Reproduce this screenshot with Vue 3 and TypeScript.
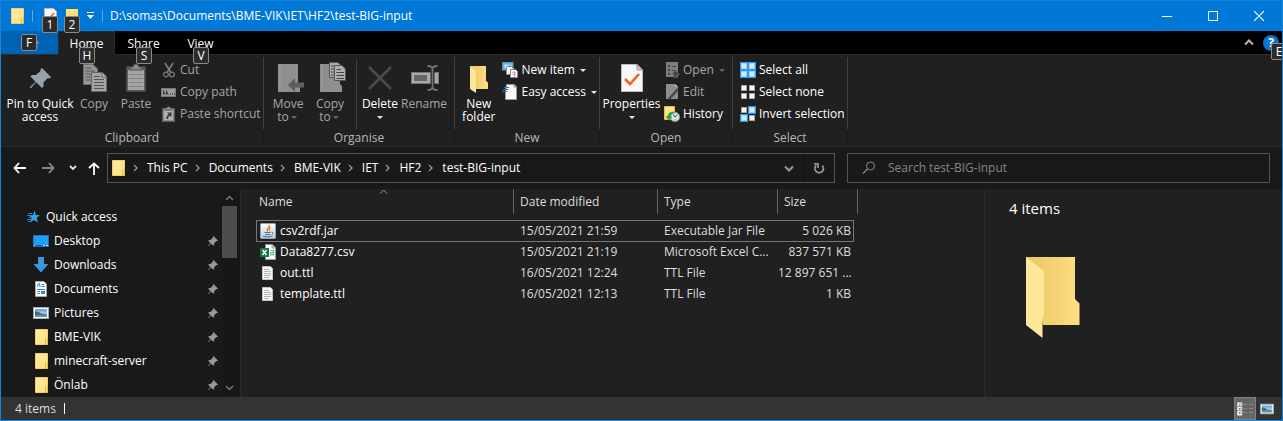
<script setup lang="ts">
import { ref } from 'vue'

interface SmallCommand {
  label: string
  icon: string
  disabled?: boolean
  menu?: boolean
}
interface LargeCommand {
  lines: string[]
  icon: string
  size: string
  disabled?: boolean
  menu?: 'inline' | 'below'
  divider?: boolean
}
interface RibbonGroup {
  name: string
  key: string
  large: LargeCommand[]
  small: SmallCommand[]
}
interface FileRow {
  name: string
  icon: string
  modified: string
  type: string
  size: string
}

const path = 'D:\\somas\\Documents\\BME-VIK\\IET\\HF2\\test-BIG-input'

const tabs = [
  { label: 'Home', tip: 'H' },
  { label: 'Share', tip: 'S' },
  { label: 'View', tip: 'V' },
]
const activeTab = ref('Home')

const groups: RibbonGroup[] = [
  {
    name: 'Clipboard',
    key: 'clipboard',
    large: [
      { lines: ['Pin to Quick', 'access'], icon: 'pin-large', size: 'wide' },
      { lines: ['Copy'], icon: 'copy', size: 'normal', disabled: true },
      { lines: ['Paste'], icon: 'paste', size: 'normal', disabled: true },
    ],
    small: [
      { label: 'Cut', icon: 'cut', disabled: true },
      { label: 'Copy path', icon: 'copy-path', disabled: true },
      { label: 'Paste shortcut', icon: 'paste-shortcut', disabled: true },
    ],
  },
  {
    name: 'Organise',
    key: 'organise',
    large: [
      { lines: ['Move', 'to'], icon: 'move-to', size: 'normal', disabled: true, menu: 'inline' },
      { lines: ['Copy', 'to'], icon: 'copy-to', size: 'normal', disabled: true, menu: 'inline' },
      { lines: ['Delete'], icon: 'delete', size: 'normal', menu: 'below', divider: true },
      { lines: ['Rename'], icon: 'rename', size: 'medium', disabled: true },
    ],
    small: [],
  },
  {
    name: 'New',
    key: 'new',
    large: [{ lines: ['New', 'folder'], icon: 'new-folder', size: 'normal' }],
    small: [
      { label: 'New item', icon: 'new-item', menu: true },
      { label: 'Easy access', icon: 'easy-access', menu: true },
    ],
  },
  {
    name: 'Open',
    key: 'open',
    large: [{ lines: ['Properties'], icon: 'properties', size: 'property', menu: 'below' }],
    small: [
      { label: 'Open', icon: 'open', disabled: true, menu: true },
      { label: 'Edit', icon: 'edit', disabled: true },
      { label: 'History', icon: 'history' },
    ],
  },
  {
    name: 'Select',
    key: 'select',
    large: [],
    small: [
      { label: 'Select all', icon: 'select-all' },
      { label: 'Select none', icon: 'select-none' },
      { label: 'Invert selection', icon: 'select-invert' },
    ],
  },
]

const crumbs = ['This PC', 'Documents', 'BME-VIK', 'IET', 'HF2', 'test-BIG-input']

const places = [
  { label: 'Desktop', icon: 'desktop' },
  { label: 'Downloads', icon: 'downloads' },
  { label: 'Documents', icon: 'documents' },
  { label: 'Pictures', icon: 'pictures' },
  { label: 'BME-VIK', icon: 'folder' },
  { label: 'minecraft-server', icon: 'folder' },
  { label: 'Önlab', icon: 'folder' },
]

const files: FileRow[] = [
  { name: 'csv2rdf.jar', icon: 'jar', modified: '15/05/2021 21:59', type: 'Executable Jar File', size: '5 026 KB' },
  { name: 'Data8277.csv', icon: 'csv', modified: '15/05/2021 21:19', type: 'Microsoft Excel C...', size: '837 571 KB' },
  { name: 'out.ttl', icon: 'text', modified: '16/05/2021 12:24', type: 'TTL File', size: '12 897 651 ...' },
  { name: 'template.ttl', icon: 'text', modified: '16/05/2021 12:13', type: 'TTL File', size: '1 KB' },
]
const focused = ref('csv2rdf.jar')
const query = ref('')
</script>

<template>
  <div class="window">
    <svg class="defs" aria-hidden="true">
      <defs>
        <linearGradient id="g-folder" x1="0" y1="0" x2="1" y2="1">
          <stop offset="0" stop-color="#ffeca6" />
          <stop offset="1" stop-color="#ffdf80" />
        </linearGradient>
        <linearGradient id="g-back" x1="0" y1="0" x2="1" y2="0">
          <stop offset="0" stop-color="#e9c464" />
          <stop offset="1" stop-color="#ffdf80" />
        </linearGradient>
        <linearGradient id="g-desk" x1="0" y1="0" x2="1" y2="1">
          <stop offset="0" stop-color="#1a96f5" />
          <stop offset="1" stop-color="#1fa8ff" />
        </linearGradient>
        <linearGradient id="g-jar" x1="0" y1="0" x2="0" y2="1">
          <stop offset="0" stop-color="#ffffff" />
          <stop offset="1" stop-color="#b9cbdb" />
        </linearGradient>
        <linearGradient id="g-sky" x1="0" y1="0" x2="0" y2="1">
          <stop offset="0" stop-color="#5fa0ea" />
          <stop offset="1" stop-color="#e4f2fb" />
        </linearGradient>
      </defs>
      <symbol id="i-folder" viewBox="0 0 16 16">
        <path d="M2.500 .5H14.500V15.500H2.500Z" fill="url(#g-folder)" stroke="#f3cf60" />
        <path d="M12.500 15.500V11L13.500 9.500H14.500V15.500Z" fill="#ffe79a" stroke="#e6b93c" />
      </symbol>
      <symbol id="i-pin" viewBox="0 0 12 12">
        <path d="M6.500 1 11 5.500 10 6.300 9.400 6 7.200 8.200 7.100 10 6.300 10.800 3.900 8.400 1 11.300.6 11 3.400 7.900 1.200 5.700 2 4.900 3.800 4.800 6 2.600 5.700 2Z" fill="#8f9aa3" />
      </symbol>
      <symbol id="i-pin-large" viewBox="0 0 32 32">
        <path d="M18 6 27 15 25.500 16.500 23.800 16 19.500 20.500 19.500 24.500 18 26 12.200 20.300 7 26H6V25L11.600 19.700 6.500 14.500 8 13 12 13 16.700 8.700 16.400 7.500Z" fill="#98a2ab" />
      </symbol>
      <symbol id="i-copy" viewBox="0 0 32 32">
        <path d="M5.500 2.500H15L19.500 7V22.500H5.500Z" fill="#969696" stroke="#6e6e6e" />
        <path d="M7.500 6H14M7.500 9H17M7.500 12H14M7.500 15H14M7.500 18H14" stroke="#555" />
        <path d="M13.500 10.500H24L28.500 15V29.500H13.500Z" fill="#a4a4a4" stroke="#666" />
        <path d="M24 10.500V15H28.500" fill="#bbb" stroke="#666" />
        <path d="M16 14.500H22M16 17.500H26M16 20.500H26M16 23.500H26M16 26.500H26" stroke="#555" />
      </symbol>
      <symbol id="i-paste" viewBox="0 0 32 32">
        <rect x="6.500" y="4.500" width="19" height="25" rx="1" fill="#5b5b5b" stroke="#494949" />
        <path d="M8 8H24V28H8Z" fill="#a3a3a3" />
        <path d="M9 12.500H23M9 16.500H23M9 20.500H23M9 24.500H23" stroke="#858585" />
        <path d="M10 8V5H13L14.500 2H17.500L19 5H22V8Z" fill="#8b8b8b" stroke="#4b4b4b" />
      </symbol>
      <symbol id="i-cut" viewBox="0 0 16 16">
        <path d="M4 1 9.700 10M12 1 6.300 10" stroke="#818181" stroke-width="1.500" fill="none" />
        <circle cx="5" cy="12.500" r="2.300" fill="none" stroke="#777" stroke-width="1.300" />
        <circle cx="11" cy="12.500" r="2.300" fill="none" stroke="#777" stroke-width="1.300" />
      </symbol>
      <symbol id="i-copy-path" viewBox="0 0 16 16">
        <rect x=".5" y="4.500" width="14" height="8" fill="#9d9d9d" stroke="#777" />
        <path d="M2 6 4 10.500M5 6 7 10.500M2.500 10.500V8M5.500 10.500V8M9 10H10M11 10H12M13 10H14" stroke="#333" fill="none" />
      </symbol>
      <symbol id="i-paste-shortcut" viewBox="0 0 16 16">
        <rect x="1.500" y="2.500" width="12" height="13" fill="#888" stroke="#5a5a5a" />
        <path d="M4.500 3.500V2H6.500L7 .8H8L8.500 2H10.500V3.500Z" fill="#aaa" stroke="#666" />
        <rect x="3" y="5" width="9" height="9" fill="#b0b0b0" />
        <path d="M6 6.500H10.500V11L9 9.500Q7 10.500 7 13H5.500Q5 10 7.800 8.300Z" fill="#3a3a3a" />
      </symbol>
      <symbol id="i-move-to" viewBox="0 0 32 32">
        <path d="M6 2H26V22L28 24V30H6Z" fill="#8f8f8f" />
        <path d="M8 2V28" stroke="#9d9d9d" />
        <path d="M16 23 23 16V20.500H32V25.500H23V30Z" fill="#5d5d5d" />
      </symbol>
      <symbol id="i-copy-to" viewBox="0 0 32 32">
        <path d="M6 2H26V22L28 24V30H6Z" fill="#8f8f8f" />
        <path d="M8 2V28" stroke="#9d9d9d" />
        <path d="M15.500.5H24L27.500 4V15.500H15.500Z" fill="#aaa" stroke="#555" />
        <path d="M17 4H20M17 7H20M17 10H20M17 13H20" stroke="#444" />
        <path d="M20.500 3.500H28L31.500 7V18.500H20.500Z" fill="#b0b0b0" stroke="#555" />
        <path d="M22.500 7.500H27M22.500 10.500H30M22.500 13.500H30M22.500 16.500H30" stroke="#444" />
      </symbol>
      <symbol id="i-delete" viewBox="0 0 32 32">
        <path d="M5 5 27 27M27 5 5 27" stroke="#4b4b4b" stroke-width="2.600" />
      </symbol>
      <symbol id="i-rename" viewBox="0 0 32 32">
        <rect x="3.500" y="10.500" width="27" height="11" fill="#aaa" stroke="#777" />
        <rect x="6" y="13" width="13" height="6" fill="#666" />
        <path d="M20 4Q24.500 4 24.500 7V25Q24.500 28 20 28M29 4Q24.500 4 24.500 7M29 28Q24.500 28 24.500 25" stroke="#202020" stroke-width="4" fill="none" />
        <path d="M19.500 4Q24.500 4 24.500 7V25Q24.500 28 19.500 28M29.500 4Q24.500 4 24.500 7M29.500 28Q24.500 28 24.500 25" stroke="#747474" stroke-width="1.800" fill="none" />
      </symbol>
      <symbol id="i-new-folder" viewBox="0 0 32 32">
        <path d="M7 4H23V19L25 20.500V27H11Z" fill="url(#g-back)" />
        <path d="M7 4 13 9V31L7 27Z" fill="#ffe799" />
      </symbol>
      <symbol id="i-new-item" viewBox="0 0 16 16">
        <rect x=".8" y=".8" width="10" height="7" fill="#7fc4ea" stroke="#4fa2cd" stroke-width="1.500" />
        <path d="M3 3H6V6H3Z" fill="#e8f4fb" />
        <path d="M4.500 4.500H9.500L11.500 6.500V12.500H4.500Z" fill="#f5f5f5" stroke="#888" />
        <path d="M8.500 7.500H13.500L15.500 9.500V15.500H8.500Z" fill="#fff" stroke="#888" />
        <path d="M10 10.500H14M10 12.500H14" stroke="#a8c1ea" />
        <path d="M12.500 9V15" stroke="#e68a84" />
      </symbol>
      <symbol id="i-easy-access" viewBox="0 0 16 16">
        <path d="M4.500.5H12L14.500 3V15.500H3.500V8Z" fill="#f7f7f7" stroke="#9a9a9a" />
        <path d="M12 .5V3H14.500" fill="#ccc" stroke="#999" />
        <path d="M2 3.500H7M1 5.500H6M0 7.500H5" stroke="#2578b7" />
      </symbol>
      <symbol id="i-properties" viewBox="0 0 32 32">
        <path d="M5.500 2.500H21L26.500 8V29.500H5.500Z" fill="#f7f7f7" stroke="#bcbcbc" />
        <path d="M21 2.500V8H26.500Z" fill="#ccc" stroke="#999" />
        <path d="M9 17 14 22 23 12" stroke="#f2641d" stroke-width="2.600" fill="none" />
      </symbol>
      <symbol id="i-open" viewBox="0 0 16 16">
        <path d="M2 0H14V15H2Z" fill="#7c7c7c" />
        <path d="M4 3H6V5H4ZM4 7H6V9H4ZM4 11H6V13H4Z" fill="#444" />
        <path d="M8 4.500H12M8 8.500H12" stroke="#4a4a4a" />
        <path d="M11.500 8.500 15.500 12.500H13V16H10V12.500H7.500Z" fill="#444" stroke="#777" stroke-width=".5" />
      </symbol>
      <symbol id="i-edit" viewBox="0 0 16 16">
        <path d="M2 0H11L14 3V15H2Z" fill="#8d8d8d" />
        <path d="M5 15 14 5" stroke="#484848" stroke-width="2.500" />
        <path d="M11 0V3H14Z" fill="#bbb" />
      </symbol>
      <symbol id="i-history" viewBox="0 0 16 16">
        <path d="M.5.500H10.500V13.500H.5Z" fill="#ffe187" stroke="#e9bd41" />
        <circle cx="11" cy="11" r="4.700" fill="#dde2e4" stroke="#888" />
        <path d="M11 11 13.500 9M11 11 9.500 8.500M11 13.500V14.500" stroke="#444" />
        <path d="M9 5.500Q4 6 3.500 10.500H1.500L5 14.500 8.500 10.500H6.500Q6.500 8 10 7.500Z" fill="#28a745" />
      </symbol>
      <symbol id="i-box" viewBox="0 0 8 8">
        <rect x="1.500" y="1.500" width="5" height="5" fill="#f5f5f5" stroke="#a5a5a5" />
      </symbol>
      <symbol id="i-box-on" viewBox="0 0 8 8">
        <path d="M0 0H8V8H0Z" fill="#3399e6" />
        <rect x="1.500" y="1.500" width="5" height="5" fill="#d5ebfb" stroke="#9dd0f5" />
      </symbol>
      <symbol id="i-select-all" viewBox="0 0 16 16">
        <use href="#i-box-on" width="8" height="8" />
        <use href="#i-box-on" x="8" width="8" height="8" />
        <use href="#i-box-on" y="8" width="8" height="8" />
        <use href="#i-box-on" x="8" y="8" width="8" height="8" />
      </symbol>
      <symbol id="i-select-none" viewBox="0 0 16 16">
        <use href="#i-box" width="8" height="8" />
        <use href="#i-box" x="8" width="8" height="8" />
        <use href="#i-box" y="8" width="8" height="8" />
        <use href="#i-box" x="8" y="8" width="8" height="8" />
      </symbol>
      <symbol id="i-select-invert" viewBox="0 0 16 16">
        <use href="#i-box" width="8" height="8" />
        <use href="#i-box-on" x="8" width="8" height="8" />
        <use href="#i-box-on" y="8" width="8" height="8" />
        <use href="#i-box" x="8" y="8" width="8" height="8" />
      </symbol>
      <symbol id="i-desktop" viewBox="0 0 16 16">
        <rect x=".5" y="2.500" width="15" height="11" fill="url(#g-desk)" stroke="#2c6fa8" />
        <path d="M1 12.500H15" stroke="#0b5ea8" />
        <path d="M1 12.500H2M10 12.500H12M13 12.500H15" stroke="#cfe8fb" />
      </symbol>
      <symbol id="i-downloads" viewBox="0 0 16 16">
        <path d="M5 0H11V7H15.500L8 15.500.5 7H5Z" fill="#3a94e0" />
      </symbol>
      <symbol id="i-documents" viewBox="0 0 16 16">
        <path d="M2.500.5H11L13.500 3V15.500H2.500Z" fill="#fff" stroke="#aaa" />
        <path d="M4 6 5.500 2.500H6.500L7 6M8.500 3.500H11M8.500 5.500H12M4 8.500H12" stroke="#2d83cc" fill="none" />
        <path d="M4 10.500H7M4 12.500H7" stroke="#888" />
        <path d="M8 10H12V13H8Z" fill="#3c87b5" />
      </symbol>
      <symbol id="i-pictures" viewBox="0 0 16 16">
        <rect x=".5" y="2.500" width="15" height="11" fill="#fff" stroke="#aaa" />
        <path d="M2 4H14V12H2Z" fill="url(#g-sky)" />
        <path d="M2 6Q6 6.500 8 8.500L14 9.500V10H2Z" fill="#3e7265" />
        <path d="M2 10H14V12H2Z" fill="#5f93a8" />
      </symbol>
      <symbol id="i-star" viewBox="0 0 16 16">
        <path d="M8.500 1.500 9.800 6 14 6.200 10.600 8.800 12 13.500 8 11 4 13.500 5.500 9 3 6.200H7Z" fill="#2fa5f2" />
        <path d="M2 4.500H6M1 6.500H5M3 8.500H6M1 10.500H5M2 12.500H5" stroke="#2f7fb8" />
      </symbol>
      <symbol id="i-jar" viewBox="0 0 16 16">
        <rect x=".5" y=".5" width="15" height="15" rx="1" fill="url(#g-jar)" stroke="#8ba5bc" />
        <path d="M9 2Q10 4 7.500 5.500 6.500 7 8 8.500M10.500 4.500Q8.500 6 9.500 8" stroke="#ea7d20" stroke-width="1.200" fill="none" />
        <path d="M4.500 9.500H10.500M5 11.500H10M3 13.500Q8 14.500 12.500 13M11.500 9Q14 9 12 11.500" stroke="#4a7193" fill="none" />
      </symbol>
      <symbol id="i-csv" viewBox="0 0 16 16">
        <path d="M5.500.5H12L15.500 4V15.500H5.500Z" fill="#fff" stroke="#999" />
        <path d="M12 .5V4H15.500Z" fill="#ddd" stroke="#999" />
        <path d="M0 4H9V13H0Z" fill="#107c41" />
        <path d="M2.500 6 6.500 11M6.500 6 2.500 11" stroke="#fff" stroke-width="1.400" />
        <path d="M10.500 6.500H13.500V11H11Q9.800 9.500 11 8.700H13.500" stroke="#43c587" stroke-width="1.200" fill="none" />
      </symbol>
      <symbol id="i-text" viewBox="0 0 16 16">
        <path d="M2.500 1.500H10.500L12.500 3.500V14.500H2.500Z" fill="#f7f7f7" stroke="#c5c5c5" />
        <path d="M4 4.500H9M4 6.500H11M4 8.500H11M4 10.500H11M4 12.500H9" stroke="#b5b5b5" />
      </symbol>
    </svg>

    <header class="titlebar">
      <svg class="i16"><use href="#i-folder" /></svg>
      <span class="bar"></span>
      <div class="quick">
        <button class="tool" aria-label="Properties">
          <svg class="i16" viewBox="0 0 16 16">
            <path d="M1.500.5H10.500L13.500 3.500V15.500H1.500Z" fill="#f7f7f7" stroke="#bbb" />
            <path d="M4 9 6 11 11 5" stroke="#f2641d" stroke-width="1.500" fill="none" />
          </svg>
          <kbd class="tip under">1</kbd>
        </button>
        <button class="tool" aria-label="New folder">
          <svg class="i16" viewBox="0 0 16 16"><path d="M1 1H13V14H1Z" fill="#ffdf7c" /></svg>
          <kbd class="tip under">2</kbd>
        </button>
      </div>
      <button class="tool more" aria-label="Customise Quick Access Toolbar">
        <svg width="7" height="8" viewBox="0 0 7 8"><path d="M0 .5H7" stroke="#fff" /><path d="M0 3H7L3.500 7Z" fill="#fff" /></svg>
      </button>
      <span class="bar"></span>
      <h1 class="path">{{ path }}</h1>
      <div class="caption">
        <button aria-label="Minimise"><svg width="10" height="10" viewBox="0 0 10 10"><path d="M0 5.500H10" stroke="#fff" /></svg></button>
        <button aria-label="Maximise"><svg width="10" height="10" viewBox="0 0 10 10"><rect x=".5" y=".5" width="9" height="9" fill="none" stroke="#fff" /></svg></button>
        <button aria-label="Close"><svg width="10" height="10" viewBox="0 0 10 10"><path d="M0 0 10 10M10 0 0 10" stroke="#fff" stroke-width="1.100" /></svg></button>
      </div>
    </header>

    <nav class="tabs">
      <button class="tab file">File<kbd class="tip file-tip">F</kbd></button>
      <button
        v-for="t in tabs"
        :key="t.label"
        class="tab"
        :class="{ active: t.label === activeTab }"
        @click="activeTab = t.label"
      >
        {{ t.label }}<kbd class="tip tab-tip">{{ t.tip }}</kbd>
      </button>
      <span class="grow"></span>
      <button class="icon-btn" aria-label="Minimise the Ribbon">
        <svg width="10" height="7" viewBox="0 0 10 7"><path d="M1 5.500 5 1.500 9 5.500" stroke="#b5b5b5" stroke-width="2" fill="none" /></svg>
      </button>
      <button class="help" aria-label="Help"><span>?</span><kbd class="tip help-tip">E</kbd></button>
    </nav>

    <div class="ribbon">
      <section v-for="g in groups" :key="g.key" class="group" :class="g.key">
        <div class="panel">
          <button
            v-for="c in g.large"
            :key="c.icon"
            class="large"
            :class="[c.size, { divided: c.divider }]"
            :disabled="c.disabled"
          >
            <svg class="i32"><use :href="'#i-' + c.icon" /></svg>
            <span v-for="(line, i) in c.lines" :key="line" class="line">
              {{ line }}<i v-if="c.menu === 'inline' && i === c.lines.length - 1" class="caret"></i>
            </span>
            <span v-if="c.menu === 'below'" class="line"><i class="caret"></i></span>
          </button>
          <div v-if="g.small.length" class="stack">
            <button v-for="c in g.small" :key="c.label" class="small" :disabled="c.disabled">
              <svg class="i16"><use :href="'#i-' + c.icon" /></svg>
              <span>{{ c.label }}</span>
              <i v-if="c.menu" class="caret"></i>
            </button>
          </div>
        </div>
        <div class="group-name">{{ g.name }}</div>
      </section>
    </div>

    <div class="nav">
      <div class="history">
        <button aria-label="Back"><svg width="14" height="12" viewBox="0 0 14 12"><path d="M6 1 1.500 6 6 11M2 6H13" stroke="#fff" stroke-width="1.800" fill="none" /></svg></button>
        <button aria-label="Forward" disabled><svg width="14" height="12" viewBox="0 0 14 12"><path d="M8 1 12.500 6 8 11M12 6H1" stroke="#8a8a8a" stroke-width="1.800" fill="none" /></svg></button>
        <button class="recent" aria-label="Recent locations"><svg width="8" height="6" viewBox="0 0 8 6"><path d="M1 1 4 4 7 1" stroke="#e5e5e5" stroke-width="1.800" fill="none" /></svg></button>
        <button aria-label="Up"><svg width="12" height="13" viewBox="0 0 12 13"><path d="M1 6 6 1.500 11 6M6 2V13" stroke="#fff" stroke-width="1.800" fill="none" /></svg></button>
      </div>
      <div class="address">
        <svg class="i16"><use href="#i-folder" /></svg>
        <template v-for="c in crumbs" :key="c">
          <svg class="sep" width="5" height="8" viewBox="0 0 5 8"><path d="M1 1 4 4 1 7" stroke="#999" stroke-width="1.300" fill="none" /></svg>
          <button class="crumb">{{ c }}</button>
        </template>
        <span class="grow"></span>
        <button class="drop" aria-label="Previous locations"><svg width="10" height="7" viewBox="0 0 10 7"><path d="M1 1.500 5 5.500 9 1.500" stroke="#999" stroke-width="2" fill="none" /></svg></button>
        <button class="refresh" aria-label="Refresh">
          <svg width="12" height="12" viewBox="0 0 12 12"><path d="M9.300 3.500A4.300 4.300 0 1 1 3.300 3.200" stroke="#999" stroke-width="1.700" fill="none" /><path d="M1 1.800H5V6" stroke="#999" stroke-width="1.600" fill="none" /></svg>
        </button>
      </div>
      <label class="search">
        <svg width="14" height="14" viewBox="0 0 14 14"><circle cx="8.500" cy="5" r="4" fill="none" stroke="#8a8a8a" /><path d="M5.500 8 1 12.500" stroke="#8a8a8a" stroke-width="1.200" /></svg>
        <input v-model="query" type="text" placeholder="Search test-BIG-input" aria-label="Search test-BIG-input" />
      </label>
    </div>

    <div class="content">
      <aside class="sidebar">
        <div class="tree">
          <a class="place root" href="#"><svg class="i16"><use href="#i-star" /></svg><span>Quick access</span></a>
          <a v-for="p in places" :key="p.label" class="place" href="#">
            <svg class="i16"><use :href="'#i-' + p.icon" /></svg>
            <span>{{ p.label }}</span>
            <svg class="pin"><use href="#i-pin" /></svg>
          </a>
        </div>
        <div class="scrollbar" aria-hidden="true">
          <svg width="9" height="6" viewBox="0 0 9 6"><path d="M1 5 4.500 1.500 8 5" stroke="#777" stroke-width="1.500" fill="none" /></svg>
          <div class="track"><div class="thumb"></div></div>
          <svg width="9" height="6" viewBox="0 0 9 6"><path d="M1 1 4.500 4.500 8 1" stroke="#777" stroke-width="1.500" fill="none" /></svg>
        </div>
      </aside>

      <main class="list">
        <table>
          <colgroup>
            <col class="c-name" /><col class="c-date" /><col class="c-type" /><col class="c-size" />
          </colgroup>
          <thead>
            <tr>
              <th scope="col" aria-sort="ascending">
                Name
                <svg class="sort" width="9" height="5" viewBox="0 0 9 5"><path d="M1 4.500 4.500 1 8 4.500" stroke="#9a9a9a" fill="none" /></svg>
              </th>
              <th scope="col">Date modified</th>
              <th scope="col">Type</th>
              <th scope="col">Size</th>
            </tr>
          </thead>
          <tbody>
            <tr v-for="f in files" :key="f.name" :class="{ focused: f.name === focused }" @click="focused = f.name">
              <td class="name"><svg class="i16"><use :href="'#i-' + f.icon" /></svg>{{ f.name }}</td>
              <td>{{ f.modified }}</td>
              <td>{{ f.type }}</td>
              <td class="size">{{ f.size }}</td>
            </tr>
          </tbody>
        </table>
      </main>

      <section class="preview">
        <h2>4 items</h2>
        <svg class="big" width="56" height="84" viewBox="0 0 56 84">
          <path d="M1 1H50V43L54.500 47.500V69H18Z" fill="url(#g-back)" />
          <path d="M1 1 19 15V59L17.500 61V82L1 69Z" fill="#ffe79b" />
        </svg>
      </section>
    </div>

    <footer class="status">
      <span>4 items</span>
      <span class="cursor"></span>
      <span class="grow"></span>
      <button class="view on" aria-label="Details view">
        <svg width="16" height="14" viewBox="0 0 16 14">
          <path d="M0 .5H5V13.500H0Z" fill="#f3f3f3" stroke="#aaa" />
          <path d="M2 2H3.500V3.500H2Z" fill="#357ec7" /><path d="M2 6H3.500V7.500H2Z" fill="#357ec7" /><path d="M2 10H3.500V11.500H2Z" fill="#d22" />
          <path d="M0 4.500H5M0 8.500H5" stroke="#999" />
          <path d="M6.500 2.500H10M12 2.500H16M6.500 6.500H10M12 6.500H16M6.500 10.500H10M12 10.500H16" stroke="#8a8a8a" />
        </svg>
      </button>
      <button class="view" aria-label="Large icons view"><svg width="14" height="14" viewBox="0 1 16 14"><use href="#i-pictures" width="16" height="16" /></svg></button>
    </footer>
  </div>
</template>

<style>
html {
  background: #191919;
}
body {
  margin: 0;
}
</style>

<style scoped>
.window {
  display: flex;
  flex-direction: column;
  box-sizing: border-box;
  min-height: 100vh;
  border: 1px solid #1883d7;
  overflow: hidden;
  background: #191919;
  color: #fff;
  font: 12px/16px "Open Sans", "Noto Sans", sans-serif;
}
.defs {
  position: absolute;
  width: 0;
  height: 0;
}
button {
  margin: 0;
  padding: 0;
  border: 0;
  background: none;
  color: inherit;
  font: inherit;
}
svg {
  display: block;
  flex: none;
}
.i16 {
  width: 16px;
  height: 16px;
}
.i32 {
  width: 32px;
  height: 32px;
}
.grow {
  flex: 1;
}
.tip {
  position: absolute;
  z-index: 2;
  box-sizing: border-box;
  width: 16px;
  height: 17px;
  border: 1px solid #8a8a8a;
  border-radius: 2px;
  background: #2b2b2b;
  color: #fff;
  font: 12px/15px "Open Sans", "Noto Sans", sans-serif;
  text-align: center;
}

.titlebar {
  display: flex;
  align-items: center;
  height: 30px;
  padding-left: 8px;
  background: #0078d7;
}
.bar {
  width: 1px;
  height: 12px;
  margin-left: 7px;
  background: #60aae6;
}
.quick {
  display: flex;
  gap: 6px;
  margin-left: 10px;
}
.tool {
  position: relative;
}
.under {
  top: 8px;
  left: -1px;
}
.more {
  margin-left: 6px;
}
.more + .bar {
  margin-left: 8px;
}
.path {
  flex: 1;
  margin: 0 0 0 7px;
  font-size: 12px;
  font-weight: 400;
}
.caption {
  display: flex;
  align-self: stretch;
}
.caption button {
  display: grid;
  place-items: center;
  width: 46px;
}

.tabs {
  display: flex;
  align-items: stretch;
  height: 23px;
  background: #000;
}
.tab {
  position: relative;
  box-sizing: border-box;
  width: 57px;
  height: 24px;
  border: 1px solid transparent;
  border-bottom: 0;
}
.tab.file {
  height: 23px;
  background: #0063b1;
  color: #6ba5d3;
}
.tab.active {
  z-index: 1;
  background: #202020;
  border-color: #2b2b2b;
}
.file-tip {
  top: 2px;
  left: 19px;
}
.tab-tip {
  top: 15px;
  left: 20px;
}
.icon-btn {
  margin-right: 9px;
}
.help {
  position: relative;
  align-self: center;
  width: 16px;
  height: 16px;
  margin-right: 3px;
  border-radius: 50%;
  background: #0b74d0;
  font-weight: 700;
}
.help-tip {
  top: 8px;
  left: 8px;
}

.ribbon {
  display: flex;
  padding-top: 2px;
  border-top: 1px solid #2b2b2b;
  border-bottom: 1px solid #2b2b2b;
  background: #202020;
}
.group {
  flex: none;
}
.panel {
  display: flex;
  box-sizing: border-box;
  height: 72px;
  padding: 2px 0 0 3px;
  border-right: 1px solid #414141;
}
.group-name {
  height: 17px;
  border-right: 1px solid #191919;
  color: #b8b8b8;
  line-height: 17px;
  text-align: center;
}
.clipboard {
  width: 263px;
}
.clipboard .panel {
  padding-left: 6px;
}
.organise {
  width: 191px;
}
.new {
  width: 145px;
}
.new .panel {
  padding-left: 4px;
}
.new .stack {
  margin-left: 4px;
}
.open {
  width: 133px;
}
.select {
  width: 115px;
}
.large {
  display: flex;
  flex-direction: column;
  align-items: center;
  width: 42px;
  padding-top: 3px;
  white-space: nowrap;
}
.large.wide {
  width: 66px;
}
.large.medium {
  width: 46px;
}
.large.property {
  width: 57px;
}
.large.divided {
  box-sizing: content-box;
  margin-left: 5px;
  padding-left: 2px;
  border-left: 1px solid #414141;
}
.large .i32 {
  margin-bottom: 3px;
}
.line {
  line-height: 13px;
}
.stack {
  margin-left: 4px;
}
.small {
  display: flex;
  align-items: center;
  gap: 3px;
  height: 22px;
  white-space: nowrap;
}
button:disabled {
  color: #a6a6a6;
}
.caret {
  display: inline-block;
  border: 3px solid transparent;
  border-top-color: #e8e8e8;
  border-bottom: 0;
  margin: 0 2px;
  vertical-align: middle;
}
button:disabled .caret {
  border-top-color: #666;
}

.nav {
  display: grid;
  grid-template-columns: 94px 728fr 423fr;
  align-items: center;
  column-gap: 12px;
  height: 42px;
  padding-right: 12px;
}
.history {
  display: flex;
  align-items: center;
  gap: 14px;
  padding-left: 12px;
}
.recent {
  margin-right: -3px;
}
.address,
.search {
  display: flex;
  align-items: center;
  box-sizing: border-box;
  min-width: 0;
  height: 30px;
  border: 1px solid #535353;
}
.address {
  padding-left: 2px;
}
.sep {
  margin: 0 9px 0 7px;
}
.crumb {
  white-space: nowrap;
}
.drop {
  padding: 0 9px;
}
.refresh {
  padding: 8px 9px;
  border-left: 1px solid #111;
}
.search {
  gap: 12px;
  padding-left: 14px;
}
.search input {
  flex: 1;
  min-width: 0;
  padding: 0;
  border: 0;
  outline: 0;
  background: none;
  color: #fff;
  font: inherit;
}
.search input::placeholder {
  color: #858585;
  opacity: 1;
}

.content {
  display: flex;
  flex: 1;
}
.sidebar {
  display: flex;
  width: 239px;
  flex: none;
  border-right: 1px solid #2b2b2b;
}
.tree {
  flex: 1;
  padding-top: 16px;
}
.place {
  display: flex;
  align-items: center;
  gap: 5px;
  height: 24px;
  padding: 0 3px 0 32px;
  color: #fff;
  text-decoration: none;
}
.place.root {
  gap: 4px;
  padding-left: 25px;
}
.place span {
  flex: 1;
}
.pin {
  width: 12px;
  height: 12px;
}
.scrollbar {
  display: flex;
  flex-direction: column;
  align-items: center;
  width: 18px;
  padding: 6px 3px 6px 0;
  box-sizing: border-box;
  background: #171717;
}
.track {
  flex: 1;
  width: 15px;
  padding: 5px 0;
}
.thumb {
  height: 52px;
  background: #4d4d4d;
}

.list {
  flex: 1;
  padding-left: 15px;
  background: #202020;
}
table {
  width: 602px;
  border-collapse: separate;
  border-spacing: 0;
  table-layout: fixed;
}
.c-name {
  width: 258px;
}
.c-date {
  width: 144px;
}
.c-type {
  width: 120px;
}
.c-size {
  width: 80px;
}
th {
  position: relative;
  height: 25px;
  padding: 0 0 0 6px;
  border-right: 1px solid #636363;
  color: #dedede;
  font-weight: 400;
  text-align: left;
}
th:first-child {
  padding-left: 3px;
}
.sort {
  position: absolute;
  top: 0;
  left: 50%;
  margin-left: -6px;
}
tbody::before {
  content: "";
  display: block;
  height: 6px;
}
td {
  height: 21px;
  padding: 0 0 0 6px;
  color: #dedede;
  white-space: nowrap;
}
td.name {
  display: flex;
  align-items: center;
  gap: 4px;
  padding-left: 4px;
  color: #fff;
}
td.size {
  padding: 0 7px 0 0;
  text-align: right;
}
tbody tr {
  position: relative;
}
.focused::after {
  content: "";
  position: absolute;
  inset: 0 4px -1px 0;
  border: 1px solid #777;
}
.preview {
  box-sizing: border-box;
  width: 298px;
  padding: 8px 0 0 24px;
  border-left: 1px solid #2b2b2b;
  background: #202020;
}
.preview h2 {
  margin: 0;
  font-size: 15px;
  font-weight: 400;
  line-height: 22px;
}
.big {
  margin: 37px 0 0 16px;
}

.status {
  display: flex;
  align-items: center;
  height: 23px;
  padding: 0 4px 0 14px;
  background: #333;
  color: #dedede;
}
.cursor {
  width: 1px;
  height: 11px;
  margin-left: 8px;
  background: #fff;
}
.view {
  display: grid;
  place-items: center;
  box-sizing: border-box;
  width: 22px;
  height: 23px;
}
.view.on {
  border: 1px solid #838383;
  background: #666;
}
</style>
